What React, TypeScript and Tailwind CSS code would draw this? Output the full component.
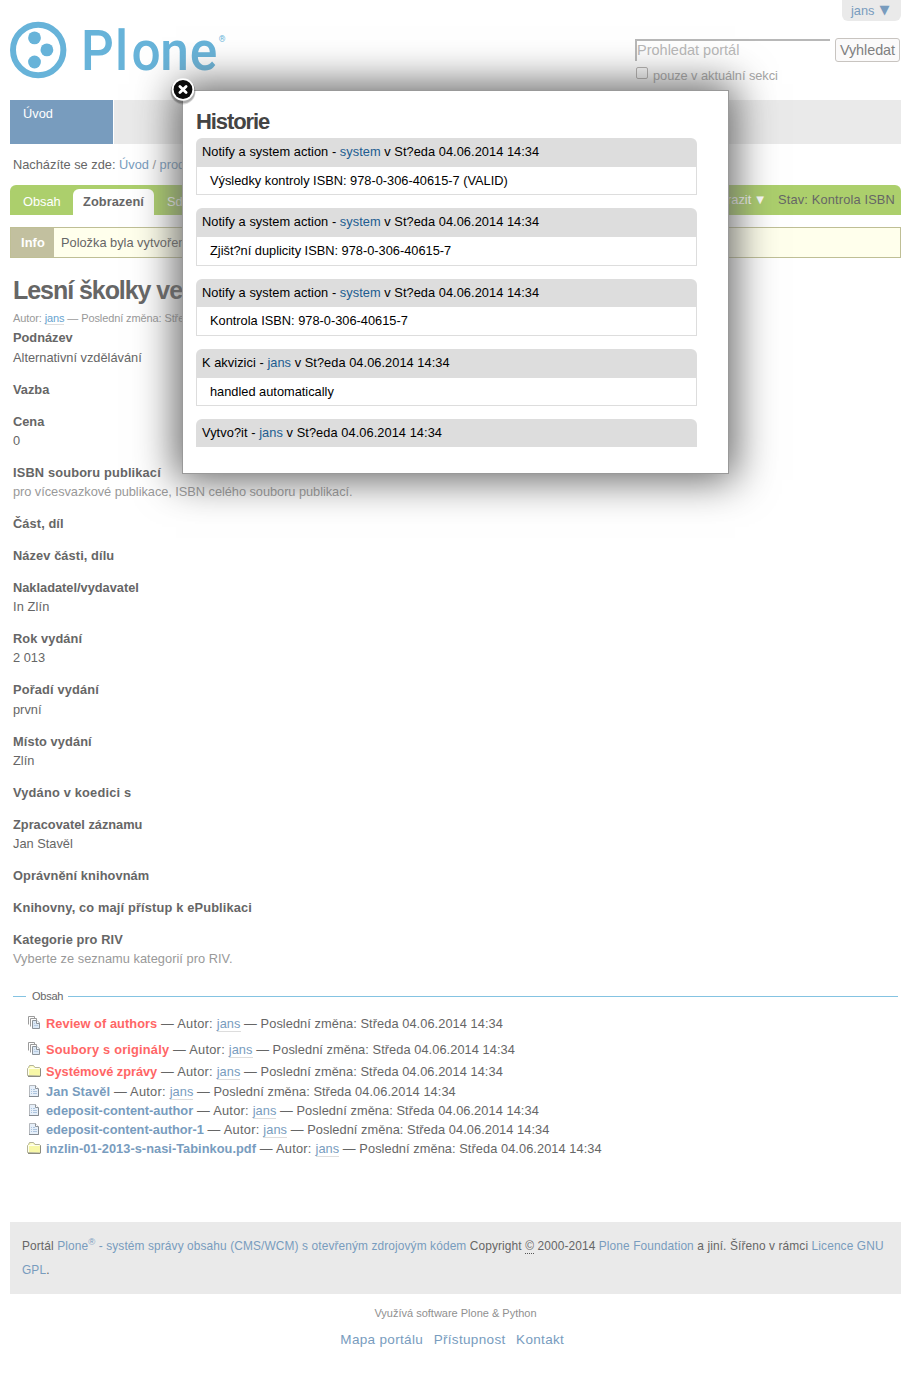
import React from "react";

type HistoryEntry = { action: string; actor: string; note?: string };

const history: HistoryEntry[] = [
  { action: "Notify a system action", actor: "system", note: "Výsledky kontroly ISBN: 978-0-306-40615-7 (VALID)" },
  { action: "Notify a system action", actor: "system", note: "Zjišt?ní duplicity ISBN: 978-0-306-40615-7" },
  { action: "Notify a system action", actor: "system", note: "Kontrola ISBN: 978-0-306-40615-7" },
  { action: "K akvizici", actor: "jans", note: "handled automatically" },
  { action: "Vytvo?it", actor: "jans" },
];

type Field = { label: string; value?: string; labelClass?: string; valueClass?: string };

const fields: Field[] = [
  { label: "Podnázev", value: "Alternativní vzdělávání" },
  { label: "Vazba" },
  { label: "Cena", value: "0" },
  {
    label: "ISBN souboru publikací",
    value: "pro vícesvazkové publikace, ISBN celého souboru publikací.",
    labelClass: "tracking-[0.160px]",
    valueClass: "tracking-[-0.045px] text-[#999]",
  },
  { label: "Část, díl", labelClass: "tracking-[0.100px]" },
  { label: "Název části, dílu", labelClass: "tracking-[0.100px]" },
  { label: "Nakladatel/vydavatel", value: "In Zlín", valueClass: "tracking-[0.120px]" },
  { label: "Rok vydání", value: "2 013", labelClass: "tracking-[0.080px]" },
  { label: "Pořadí vydání", value: "první", labelClass: "tracking-[0.150px]" },
  { label: "Místo vydání", value: "Zlín", labelClass: "tracking-[0.100px]" },
  { label: "Vydáno v koedici s", labelClass: "tracking-[0.200px]" },
  { label: "Zpracovatel záznamu", value: "Jan Stavěl" },
  { label: "Oprávnění knihovnám", labelClass: "tracking-[0.100px]" },
  { label: "Knihovny, co mají přístup k ePublikaci", labelClass: "tracking-[0.160px]" },
  {
    label: "Kategorie pro RIV",
    value: "Vyberte ze seznamu kategorií pro RIV.",
    labelClass: "tracking-[0.100px]",
    valueClass: "tracking-[0.040px] text-[#999]",
  },
];

type Kind = "collection" | "folder" | "page";
const contents: { title: string; kind: Kind; row: string; link: string }[] = [
  { title: "Review of authors", kind: "collection", row: "h-[26px]", link: "text-[#ff6666] tracking-[0.060px]" },
  { title: "Soubory s originály", kind: "collection", row: "h-[26px]", link: "text-[#ff6666] tracking-[0.200px]" },
  { title: "Systémové zprávy", kind: "folder", row: "h-[18px]", link: "text-[#ff6666] tracking-[-0.030px]" },
  { title: "Jan Stavěl", kind: "page", row: "h-[22px]", link: "text-[#789cbe] tracking-[0.080px]" },
  { title: "edeposit-content-author", kind: "page", row: "h-[16px]", link: "text-[#789cbe] tracking-[0]" },
  { title: "edeposit-content-author-1", kind: "page", row: "h-[22px]", link: "text-[#789cbe] tracking-[-0.030px]" },
  { title: "inzlin-01-2013-s-nasi-Tabinkou.pdf", kind: "folder", row: "h-[16px]", link: "text-[#789cbe] tracking-[0.035px]" },
];

function KindIcon({ kind }: { kind: Kind }) {
  if (kind === "folder")
    return (
      <svg width="16" height="16" viewBox="0 0 16 16" className="mb-[2px] shrink-0">
        <path d="M1.500 12.500V5.500l1-1 1-2h4l1.500 2h4.500l1 1v7.500z" fill="#f8f8a8" stroke="#b4b49a" />
        <path d="M2.500 12V5.500h11" fill="none" stroke="#ffffee" />
        <path d="M4 4.500l.5-1h2.500l1 1.500" fill="#ffffee" />
        <path d="M2 13.500h12l.5-.5V5.500" fill="none" stroke="#8c8c80" />
      </svg>
    );
  if (kind === "page")
    return (
      <svg width="16" height="16" viewBox="0 0 16 16" className="mb-[2px] shrink-0">
        <path d="M3.500 2.500h6l3 3v8h-9z" fill="#e6eff9" stroke="#b4b8bd" />
        <path d="M9.500 2.500v3h3" fill="#fff" stroke="#8d9299" />
        <path d="M5 6.500h1M7 6.500h2M5 8.500h1M7 8.500h4M5 10.500h1M7 10.500h4" stroke="#adc4de" />
        <path d="M3 13.500h9.500V6" fill="none" stroke="#858b92" />
      </svg>
    );
  return (
    <svg width="16" height="16" viewBox="0 0 16 16" className="mb-[2px] shrink-0">
      <path d="M2.500 9.500v-8h6v2" fill="#fff" stroke="#9b9b9b" />
      <path d="M4.500 11.500v-8h6v2" fill="#fff" stroke="#9b9b9b" />
      <path d="M6.500 5.500h4.500l2.500 2.500v5.500h-7z" fill="#dbe8f6" stroke="#8b9299" />
      <path d="M10.500 5.500v3h3" fill="#fff" stroke="#8b9299" />
      <path d="M8 8.500h1M8 10.500h4" stroke="#b8cce2" />
    </svg>
  );
}

function Logo() {
  return (
    <svg width="220" height="100" viewBox="0 -22 220 100" className="block">
      <circle cx="28.200" cy="28" r="25.200" fill="none" stroke="#67b3d9" strokeWidth="6" />
      <g fill="#67b3d9">
        <circle cx="24.500" cy="15.900" r="6.400" />
        <circle cx="36.900" cy="27.900" r="6.400" />
        <circle cx="24.500" cy="40" r="6.400" />
        <text x="77.200 114 132.200 163.300 195.300" y="47.600" transform="scale(.92 1)" fontSize="56" fontWeight="500" className="font-[Roboto,sans-serif]">
          Plone
        </text>
        <text x="208.800" y="19.500" fontSize="8.500" className="font-[Roboto,sans-serif]">®</text>
      </g>
    </svg>
  );
}

function HistoryDialog() {
  return (
    <div className="absolute left-[182px] top-[90px] h-[384px] w-[547px] border border-[#999] bg-white pl-[13px] pt-[16.850px] text-black shadow-[0_0_39px_6px_#646464]">
      <svg width="30" height="30" viewBox="0 0 30 30" className="absolute -left-[15px] -top-[16px]">
        <circle cx="15" cy="17" r="12.500" fill="#000" opacity=".15" />
        <circle cx="15" cy="16" r="12.200" fill="#000" opacity=".2" />
        <circle cx="15" cy="14.500" r="11.300" fill="#fff" />
        <circle cx="15" cy="14.500" r="9.400" fill="#0a0a0a" />
        <path d="M11.900 11.400l6.200 6.200M18.100 11.400l-6.200 6.200" stroke="#fff" strokeWidth="2.800" strokeLinecap="round" />
      </svg>
      <h2 className="h-[30px] text-[22px] font-bold leading-[27px] tracking-[-1.100px] text-[#444]">Historie</h2>
      {history.map((h, i) => (
        <div key={i} className="mb-[12.850px] w-[501px]">
          <div className={h.note ? "h-[28.750px] rounded-t-[6px] bg-[#ddd] pl-[6px] leading-[28.300px] tracking-[0.050px]" : "h-[28px] rounded-t-[6px] bg-[#ddd] pl-[6px] leading-[28.500px] tracking-[0.070px]"}>
            {h.action} - <a className="text-[#205c90]">{h.actor}</a> v St?eda 04.06.2014 14:34
          </div>
          {h.note && <div className="h-[28.750px] border border-t-0 border-[#ddd] pl-[13px] leading-[28.600px]">{h.note}</div>}
        </div>
      ))}
    </div>
  );
}

export default function App() {
  return (
    <div className="relative h-[1374px] w-[911px] overflow-hidden bg-white px-[10px] font-['Liberation_Sans',Arial,sans-serif] text-[12.800px] leading-[19.200px] text-[#666]">
      <header className="flex h-[100px] justify-between">
        <Logo />
        <div className="flex w-[266px] flex-col">
          <div className="flex h-[21px] w-[59px] gap-[5px] self-end rounded-b-[6px] bg-[#eaeaea] pl-[9px] leading-[21px] text-[#789cbe]">
            <span>jans</span>
            <span className="font-['DejaVu_Sans',sans-serif] text-[13px] leading-[20px]">▼</span>
          </div>
          <div className="mt-[17px] flex gap-[5px]">
            <div className="mt-px h-[22px] w-[195px] border-l-2 border-t-2 border-[#b8b8b8] text-[14.500px] leading-[19px] text-[#b8b8b8]">Prohledat portál</div>
            <button className="h-[24px] w-[65px] rounded-[3px] border border-[#c8c4c0] bg-[#fbfafa] text-[14.400px] leading-[21px] tracking-[-0.050px] text-[#808080]">Vyhledat</button>
          </div>
          <div className="flex pl-px pt-[5px] text-[#a5a5a5]">
            <span className="mr-[5px] h-[12px] w-[12px] rounded-[2px] border border-[#b5b2b0] bg-white" />
            <span className="leading-[18px] tracking-[-0.050px]">pouze v aktuální sekci</span>
          </div>
        </div>
      </header>

      <nav className="flex h-[44px] bg-[#eaeaea]">
        <div className="w-[104px] border-r border-white bg-[#789cbe] pl-[13px] pt-[4px] text-white">Úvod</div>
      </nav>
      <div className="h-[41px] pl-[3px] pt-[11px]">
        Nacházíte se zde: <a className="text-[#789cbe]">Úvod</a> <span className="text-[#999]">/</span> <a className="text-[#789cbe]">prod</a>
      </div>

      <div className="flex h-[30px] justify-between rounded-t-[6px] bg-[#accf6c] text-white">
        <div className="flex pt-[4px] leading-[26px]">
          <span className="w-[63px] pl-[13px]">Obsah</span>
          <span className="w-[81px] rounded-t-[6px] bg-white text-center font-bold tracking-[0.050px] text-[#666]">Zobrazení</span>
          <span className="pl-[13px]">Sdílení</span>
        </div>
        <div className="flex gap-[14px] pr-[6px] leading-[30px]">
          <span className="flex gap-[5px]">
            <span>Zobrazit</span>
            <span className="font-['DejaVu_Sans',sans-serif] text-[10px] leading-[29px]">▼</span>
          </span>
          <span className="tracking-[0.170px] text-[#666]">Stav: Kontrola ISBN</span>
        </div>
      </div>

      <div className="mt-[12px] flex h-[31px] border border-[#bfbf95] bg-[#ffffec] leading-[30px]">
        <span className="w-[43px] bg-[#c2c09f] pl-[10px] font-bold tracking-[0.100px] text-white">Info</span>
        <span className="pl-[7px]">Položka byla vytvořena</span>
      </div>

      <main className="px-[3px]">
        <h1 className="mt-[16px] h-[35px] text-[25px] font-bold leading-[33px] tracking-[-1.050px]">Lesní školky ve</h1>
        <div className="h-[19.400px] text-[11px] leading-[18px] tracking-[-0.110px] text-[#999]">
          Autor: <a className="border-b border-[#ddd] text-[#67a3d0]">jans</a> — Poslední změna: Středa
        </div>
        {fields.map((f) => (
          <div key={f.label} className="mb-[12.800px]">
            <div className={`font-bold ${f.labelClass ?? ""}`}>{f.label}</div>
            {f.value && <div className={f.valueClass}>{f.value}</div>}
          </div>
        ))}

        <div className="mt-[18.600px] flex h-[18px] items-center text-[11px]">
          <span className="mr-[6px] h-px w-[13px] bg-[#84c3e2]" />
          <span className="pt-px tracking-[-0.250px]">Obsah</span>
          <span className="ml-[5px] h-px flex-1 bg-[#84c3e2]" />
        </div>
        <ul className="pl-[13px] pt-[6px]">
          {contents.map((c) => (
            <li key={c.title} className={`flex items-center ${c.row}`}>
              <KindIcon kind={c.kind} />
              <span className="ml-[4px] whitespace-nowrap tracking-[0.065px]">
                <a className={`font-bold ${c.link}`}>{c.title}</a>
                <span className="tracking-[0.260px]"> — Autor: </span>
                <a className="border-b border-[#ddd] text-[#789cbe]">jans</a> — Poslední změna: Středa 04.06.2014 14:34
              </span>
            </li>
          ))}
        </ul>
      </main>

      <footer className="mt-[65px]">
        <div className="h-[72px] bg-[#eaeaea] px-[12px] pt-[12px] text-[11.900px] leading-[24px] tracking-[0.115px]">
          Portál <a className="text-[#789cbe]">Plone<sup className="text-[9.500px]">®</sup> - systém správy obsahu (CMS/WCM) s otevřeným zdrojovým kódem</a> Copyright{" "}
          <span className="border-b border-dotted border-[#555]">©</span> 2000-2014 <a className="text-[#789cbe]">Plone Foundation</a> a jiní. Šířeno v rámci{" "}
          <a className="text-[#789cbe]">Licence GNU<br />GPL</a>.
        </div>
        <div className="mt-[10px] text-center text-[11px] text-[#909090]">Využívá software Plone &amp; Python</div>
        <div className="mt-[7px] flex justify-center gap-[10.500px] pr-[6.500px] text-[13.500px] tracking-[0.330px] text-[#789cbe]">
          <a>Mapa portálu</a>
          <a>Přístupnost</a>
          <a>Kontakt</a>
        </div>
      </footer>

      <HistoryDialog />
    </div>
  );
}
